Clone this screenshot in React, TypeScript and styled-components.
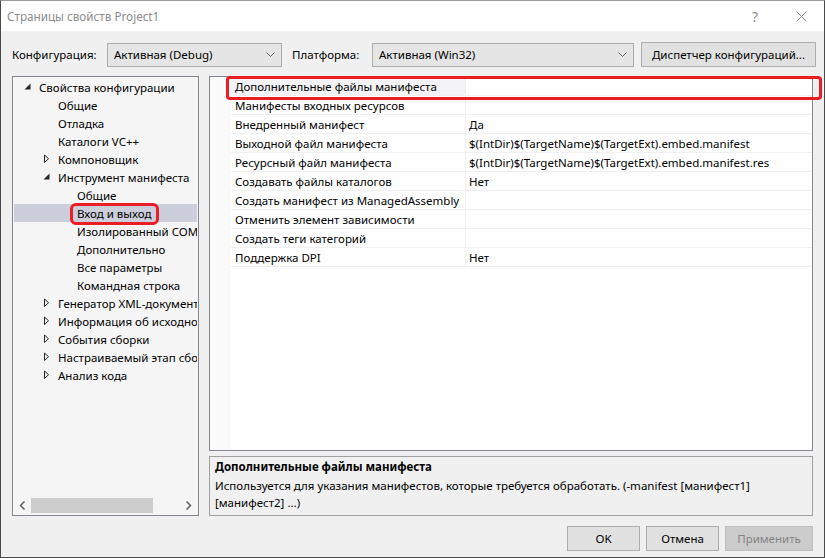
import React from 'react';
import styled, { createGlobalStyle } from 'styled-components';

const GlobalStyle = createGlobalStyle`
  html, body {
    margin: 0;
    padding: 0;
    background: #f0f0f0;
  }
  body {
    font-family: 'Noto Sans', 'Segoe UI', sans-serif;
    font-size: 11.5px;
    color: #000;
  }
`;

const Window = styled.div`
  position: relative;
  width: 825px;
  height: 558px;
  box-sizing: border-box;
  border: 1px solid #4a4a4a;
  border-top-color: #9a9a9a;
  background: #f0f0f0;
  display: flex;
  flex-direction: column;
  overflow: hidden;
`;

const TitleBar = styled.div`
  height: 30px;
  background: #fff;
  display: flex;
  align-items: center;
  padding-left: 6px;
`;

const TitleText = styled.div`
  flex: 1;
  color: #8c8c8c;
  font-size: 11.7px;
`;

const CaptionButton = styled.div`
  width: 46px;
  height: 30px;
  display: flex;
  align-items: center;
  justify-content: center;
  color: #8c8c8c;
  font-size: 14px;
`;

const Toolbar = styled.div`
  display: flex;
  align-items: center;
  margin: 11px 0 0 11px;
  height: 25px;
`;

const FieldLabel = styled.div<{ $w: number; $ml?: number }>`
  width: ${(p) => p.$w}px;
  margin-left: ${(p) => p.$ml ?? 0}px;
  white-space: nowrap;
`;

const Select = styled.div<{ $w: number }>`
  width: ${(p) => p.$w}px;
  height: 24px;
  box-sizing: border-box;
  border: 1px solid #adadad;
  background: #e5e5e5;
  display: flex;
  align-items: center;
  padding: 0 6px;
  justify-content: space-between;
`;

const Button = styled.div<{ $w: number; $disabled?: boolean; $ml?: number }>`
  width: ${(p) => p.$w}px;
  height: 25px;
  margin-left: ${(p) => p.$ml ?? 0}px;
  box-sizing: border-box;
  border: 1px solid ${(p) => (p.$disabled ? '#bfbfbf' : '#adadad')};
  background: ${(p) => (p.$disabled ? '#cccccc' : '#e1e1e1')};
  color: ${(p) => (p.$disabled ? '#838383' : '#000')};
  display: flex;
  align-items: center;
  justify-content: center;
  white-space: nowrap;
`;

const Main = styled.div`
  display: flex;
  gap: 10px;
  margin: 9px 11px 0 11px;
  height: 440px;
`;

const Tree = styled.div`
  width: 187px;
  box-sizing: border-box;
  border: 1px solid #828790;
  background: #f5f5f5;
  display: flex;
  flex-direction: column;
  height: 440px;
`;

const TreeBody = styled.div`
  flex: 1;
  overflow: hidden;
  padding-top: 1px;
`;

const TreeRow = styled.div<{ $level: number; $selected?: boolean }>`
  height: 18px;
  display: flex;
  align-items: center;
  padding-left: ${(p) => 9 + p.$level * 19}px;
  margin: 0 1px;
  background: ${(p) => (p.$selected ? '#cccedb' : 'transparent')};
  white-space: nowrap;
  overflow: hidden;
`;

const Expander = styled.div`
  width: 16px;
  height: 16px;
  flex: none;
  display: flex;
  align-items: center;
`;

const HScroll = styled.div`
  height: 17px;
  margin: 0 1px 1px 1px;
  display: flex;
  align-items: center;
  background: #f5f5f5;
`;

const ScrollArrow = styled.div`
  width: 17px;
  height: 17px;
  display: flex;
  align-items: center;
  justify-content: center;
  flex: none;
`;

const ScrollTrack = styled.div`
  flex: 1;
  height: 15px;
  display: flex;
`;

const ScrollThumb = styled.div`
  width: 122px;
  height: 15px;
  background: #cdcdcd;
`;

const RightColumn = styled.div`
  width: 605px;
  display: flex;
  flex-direction: column;
  gap: 5px;
`;

const Grid = styled.div`
  height: 375px;
  box-sizing: border-box;
  border: 1px solid #828790;
  background: #fff;
  display: flex;
`;

const Gutter = styled.div`
  width: 21px;
  background: #fafafa;
  flex: none;
`;

const Rows = styled.div`
  flex: 1;
  display: flex;
  flex-direction: column;
`;

const GridRow = styled.div`
  height: 19px;
  box-sizing: border-box;
  border-bottom: 1px solid #f0f0f0;
  display: flex;
`;

const NameCell = styled.div<{ $active?: boolean }>`
  width: 235px;
  box-sizing: border-box;
  border-right: 1px solid #f0f0f0;
  padding-left: 4px;
  display: flex;
  align-items: center;
  white-space: nowrap;
  overflow: hidden;
  background: ${(p) => (p.$active ? '#f3f3f5' : '#fff')};
`;

const ValueCell = styled.div`
  flex: 1;
  padding-left: 3px;
  display: flex;
  align-items: center;
  white-space: nowrap;
  overflow: hidden;
`;

const Description = styled.div`
  height: 60px;
  box-sizing: border-box;
  border: 1px solid #a0a0a0;
  background: #f0f0f0;
  padding: 1px 5px 0 5px;
  line-height: 17px;
`;

const DescTitle = styled.div`
  font-weight: bold;
  margin-bottom: 2px;
  white-space: nowrap;
`;

const DescLine = styled.div`
  white-space: nowrap;
`;

const Footer = styled.div`
  display: flex;
  justify-content: flex-end;
  gap: 6px;
  margin: 10px 11px 0 0;
`;

const Annotation = styled.div<{ $radius: number; $width: number }>`
  position: absolute;
  box-sizing: border-box;
  border: ${(p) => p.$width}px solid #ea1c24;
  border-radius: ${(p) => p.$radius}px;
  pointer-events: none;
`;

const Chevron = () => (
  <svg width="9" height="6" viewBox="0 0 9 6">
    <path d="M0.5 0.5 L4.5 4.5 L8.5 0.5" fill="none" stroke="#606060" strokeWidth="1" />
  </svg>
);

const ExpandedIcon = () => (
  <svg width="16" height="16" viewBox="0 0 16 16">
    <path d="M7.5 4.5 L7.5 10.5 L1.5 10.5 Z" fill="#262626" />
  </svg>
);

const CollapsedIcon = () => (
  <svg width="16" height="16" viewBox="0 0 16 16">
    <path d="M2.5 4 L2.5 11.5 L6.5 7.75 Z" fill="none" stroke="#262626" strokeWidth="1" />
  </svg>
);

type TreeItem = { label: string; level: number; state?: 'open' | 'closed'; selected?: boolean };

// long labels are clipped by the tree's right edge, as in the dialog
const treeItems: TreeItem[] = [
  { label: 'Свойства конфигурации', level: 0, state: 'open' },
  { label: 'Общие', level: 1 },
  { label: 'Отладка', level: 1 },
  { label: 'Каталоги VC++', level: 1 },
  { label: 'Компоновщик', level: 1, state: 'closed' },
  { label: 'Инструмент манифеста', level: 1, state: 'open' },
  { label: 'Общие', level: 2 },
  { label: 'Вход и выход', level: 2, selected: true },
  { label: 'Изолированный COM', level: 2 },
  { label: 'Дополнительно', level: 2 },
  { label: 'Все параметры', level: 2 },
  { label: 'Командная строка', level: 2 },
  { label: 'Генератор XML-документов', level: 1, state: 'closed' },
  { label: 'Информация об исходном коде', level: 1, state: 'closed' },
  { label: 'События сборки', level: 1, state: 'closed' },
  { label: 'Настраиваемый этап сборки', level: 1, state: 'closed' },
  { label: 'Анализ кода', level: 1, state: 'closed' },
];

const properties: [string, string][] = [
  ['Дополнительные файлы манифеста', ''],
  ['Манифесты входных ресурсов', ''],
  ['Внедренный манифест', 'Да'],
  ['Выходной файл манифеста', '$(IntDir)$(TargetName)$(TargetExt).embed.manifest'],
  ['Ресурсный файл манифеста', '$(IntDir)$(TargetName)$(TargetExt).embed.manifest.res'],
  ['Создавать файлы каталогов', 'Нет'],
  ['Создать манифест из ManagedAssembly', ''],
  ['Отменить элемент зависимости', ''],
  ['Создать теги категорий', ''],
  ['Поддержка DPI', 'Нет'],
];

export default function App() {
  return (
    <>
      <GlobalStyle />
      <Window>
        <TitleBar>
          <TitleText>Страницы свойств Project1</TitleText>
          <CaptionButton>?</CaptionButton>
          <CaptionButton>
            <svg width="11" height="11" viewBox="0 0 11 11">
              <path d="M0.5 0.5 L10.5 10.5 M10.5 0.5 L0.5 10.5" stroke="#8c8c8c" strokeWidth="1" />
            </svg>
          </CaptionButton>
        </TitleBar>

        <Toolbar>
          <FieldLabel $w={95}>Конфигурация:</FieldLabel>
          <Select $w={175}>
            <span>Активная (Debug)</span>
            <Chevron />
          </Select>
          <FieldLabel $w={80} $ml={10}>Платформа:</FieldLabel>
          <Select $w={262}>
            <span>Активная (Win32)</span>
            <Chevron />
          </Select>
          <Button $w={175} $ml={7}>Диспетчер конфигураций...</Button>
        </Toolbar>

        <Main>
          <Tree>
            <TreeBody>
              {treeItems.map((item, i) => (
                <TreeRow key={i} $level={item.level} $selected={item.selected}>
                  <Expander>
                    {item.state === 'open' && <ExpandedIcon />}
                    {item.state === 'closed' && <CollapsedIcon />}
                  </Expander>
                  <span>{item.label}</span>
                </TreeRow>
              ))}
            </TreeBody>
            <HScroll>
              <ScrollArrow>
                <svg width="7" height="9" viewBox="0 0 7 9">
                  <path d="M5.5 0.5 L1.5 4.5 L5.5 8.5" fill="none" stroke="#606060" strokeWidth="1.5" />
                </svg>
              </ScrollArrow>
              <ScrollTrack>
                <ScrollThumb />
              </ScrollTrack>
              <ScrollArrow>
                <svg width="7" height="9" viewBox="0 0 7 9">
                  <path d="M1.5 0.5 L5.5 4.5 L1.5 8.5" fill="none" stroke="#606060" strokeWidth="1.5" />
                </svg>
              </ScrollArrow>
            </HScroll>
          </Tree>

          <RightColumn>
            <Grid>
              <Gutter />
              <Rows>
                {properties.map(([name, value], i) => (
                  <GridRow key={name}>
                    <NameCell $active={i === 0}>{name}</NameCell>
                    <ValueCell>{value}</ValueCell>
                  </GridRow>
                ))}
              </Rows>
            </Grid>
            <Description>
              <DescTitle>Дополнительные файлы манифеста</DescTitle>
              <DescLine>
                Используется для указания манифестов, которые требуется обработать. (-manifest [манифест1]
              </DescLine>
              <DescLine>[манифест2] ...)</DescLine>
            </Description>
          </RightColumn>
        </Main>

        <Footer>
          <Button $w={73}>OK</Button>
          <Button $w={73}>Отмена</Button>
          <Button $w={88} $disabled>
            Применить
          </Button>
        </Footer>

        <Annotation $radius={4} $width={3} style={{ left: 225, top: 75, width: 596, height: 24 }} />
        <Annotation $radius={6} $width={3} style={{ left: 69, top: 202, width: 89, height: 22 }} />
      </Window>
    </>
  );
}
